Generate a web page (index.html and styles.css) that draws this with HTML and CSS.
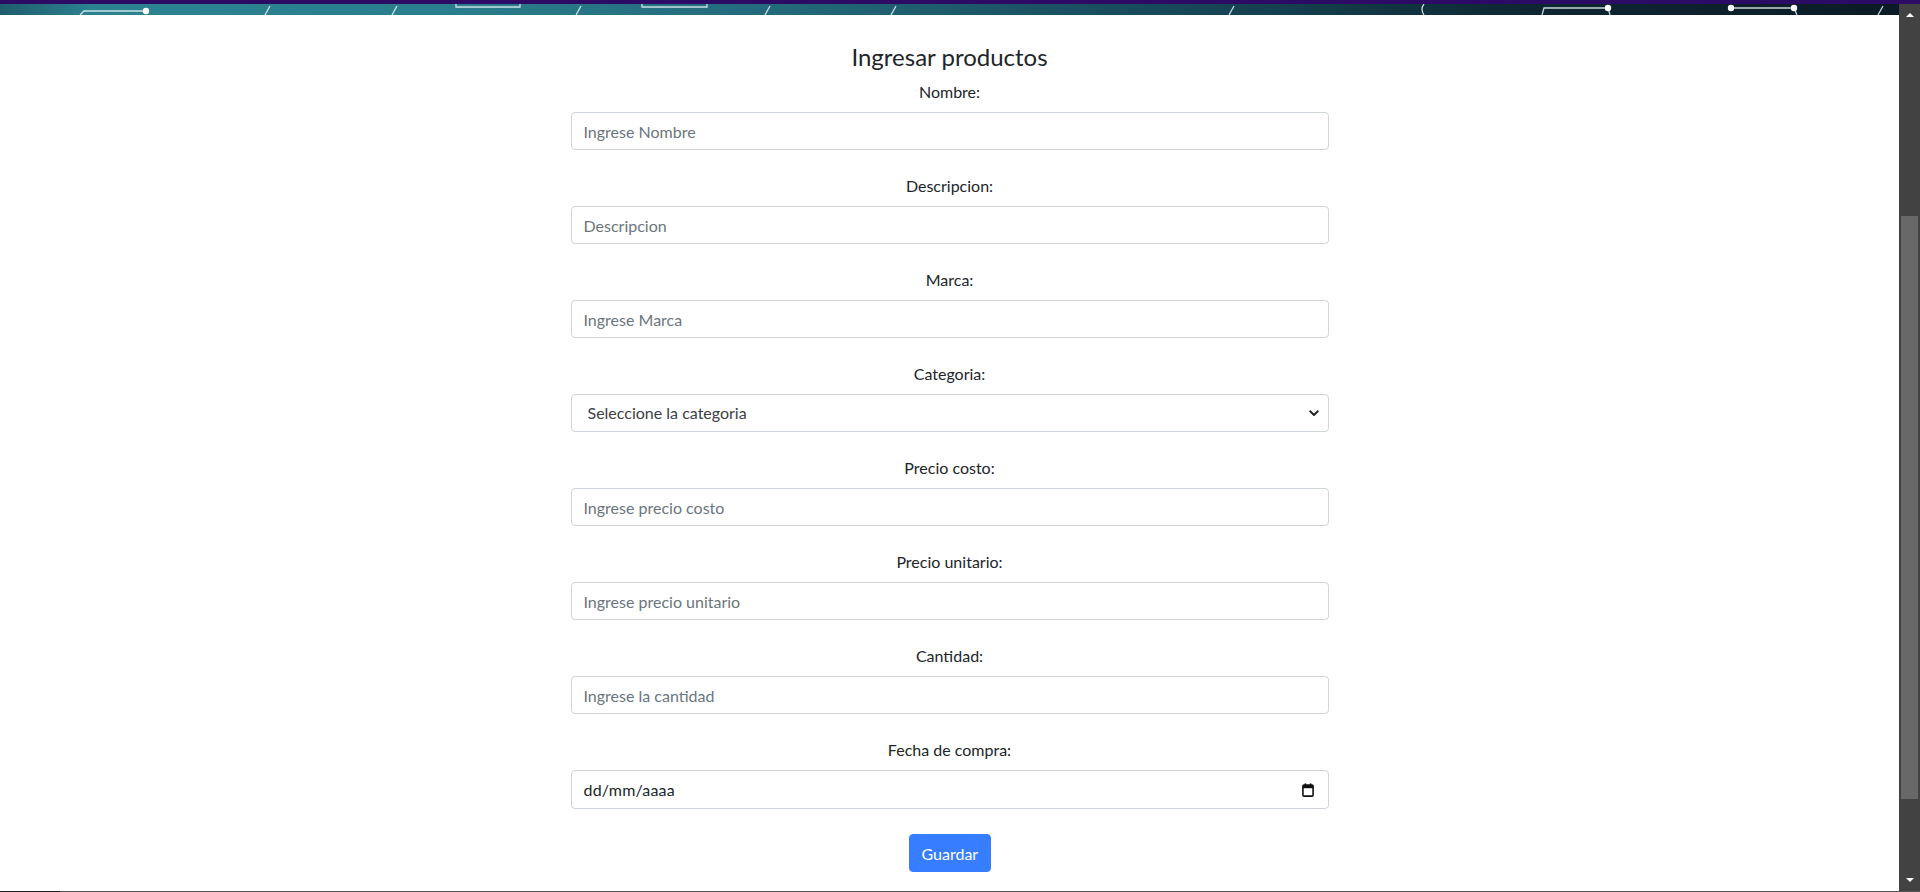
FILE: index.html
```html
<!DOCTYPE html>
<html lang="es">
<head>
<meta charset="utf-8">
<title>Ingresar productos</title>
<link rel="stylesheet" href="styles.css">
</head>
<body>
<div class="topstrip"></div>
<div class="window">
  <div class="page">
    <div class="banner">
      <svg class="banner-art" width="1899" height="11" viewBox="0 0 1899 11" preserveAspectRatio="none">
        <defs>
          <linearGradient id="bg" x1="0" y1="0" x2="1" y2="0">
            <stop offset="0" stop-color="#1f5c6e"/>
            <stop offset="0.05" stop-color="#2c8390"/>
            <stop offset="0.22" stop-color="#2b7f8c"/>
            <stop offset="0.4" stop-color="#236b7c"/>
            <stop offset="0.55" stop-color="#1b5264"/>
            <stop offset="0.68" stop-color="#143f4e"/>
            <stop offset="0.8" stop-color="#0e2733"/>
            <stop offset="1" stop-color="#0b1b26"/>
          </linearGradient>
        </defs>
        <rect width="1899" height="11" fill="url(#bg)"/>
        <g stroke="#e6f4f6" stroke-width="1.3" fill="none" stroke-opacity="0.85">
          <path d="M80 11 L84 7 L146 7"/>
          <path d="M265 11 L270 2"/>
          <path d="M392 11 L397 2"/>
          <path d="M456 0 L456 3 L520 3 L520 0"/>
          <path d="M576 11 L581 2"/>
          <path d="M642 0 L642 3 L707 3 L707 0"/>
          <path d="M765 11 L770 2"/>
          <path d="M891 11 L896 2"/>
          <path d="M1229 11 L1234 2"/>
          <path d="M1424 0 Q1420 5 1424 11"/>
          <path d="M1542 11 L1544 4 L1608 4 L1610 11"/>
          <path d="M1731 4 L1794 4 L1797 11"/>
          <path d="M1878 11 L1883 2"/>
        </g>
        <g fill="#ffffff">
          <circle cx="146" cy="7" r="3.2"/>
          <circle cx="1608" cy="4" r="3.2"/>
          <circle cx="1731" cy="4" r="3.2"/>
          <circle cx="1794" cy="4" r="3.2"/>
        </g>
      </svg>
    </div>
    <main class="content">
      <h4 class="title">Ingresar productos</h4>
      <form class="product-form">
        <div class="form-group">
          <label class="field-label" for="nombre">Nombre:</label>
          <input class="form-control" id="nombre" type="text" placeholder="Ingrese Nombre">
        </div>
        <div class="form-group">
          <label class="field-label" for="descripcion">Descripcion:</label>
          <input class="form-control" id="descripcion" type="text" placeholder="Descripcion">
        </div>
        <div class="form-group">
          <label class="field-label" for="marca">Marca:</label>
          <input class="form-control" id="marca" type="text" placeholder="Ingrese Marca">
        </div>
        <div class="form-group">
          <label class="field-label" for="categoria">Categoria:</label>
          <div class="select-wrap">
            <select class="form-control form-select" id="categoria">
              <option>Seleccione la categoria</option>
            </select>
            <svg class="select-arrow" width="10" height="7" viewBox="0 0 10 7"><path d="M1.2 1.3 L5 5 L8.8 1.3" fill="none" stroke="#222" stroke-width="1.9" stroke-linecap="round" stroke-linejoin="round"/></svg>
          </div>
        </div>
        <div class="form-group">
          <label class="field-label" for="costo">Precio costo:</label>
          <input class="form-control" id="costo" type="text" placeholder="Ingrese precio costo">
        </div>
        <div class="form-group">
          <label class="field-label" for="unitario">Precio unitario:</label>
          <input class="form-control" id="unitario" type="text" placeholder="Ingrese precio unitario">
        </div>
        <div class="form-group">
          <label class="field-label" for="cantidad">Cantidad:</label>
          <input class="form-control" id="cantidad" type="text" placeholder="Ingrese la cantidad">
        </div>
        <div class="form-group">
          <label class="field-label" for="fecha">Fecha de compra:</label>
          <div class="form-control date-control" id="fecha">
            <span class="date-text">dd/mm/aaaa</span>
            <svg class="cal-icon" width="12" height="14" viewBox="0 0 12 14"><rect x="0.9" y="2" width="10.2" height="11.1" rx="1.2" fill="none" stroke="#111" stroke-width="1.6"/><rect x="0.9" y="2" width="10.2" height="3.2" fill="#111"/><rect x="2.6" y="0.4" width="1.6" height="2.6" fill="#111"/><rect x="7.8" y="0.4" width="1.6" height="2.6" fill="#111"/></svg>
          </div>
        </div>
        <div class="actions">
          <button class="btn-primary" type="button">Guardar</button>
        </div>
      </form>
    </main>
  </div>
  <div class="scrollbar">
    <div class="sb-btn"><span class="tri-up"></span></div>
    <div class="sb-track"><div class="sb-thumb"></div></div>
    <div class="sb-btn sb-btn-down"><span class="tri-down"></span></div>
  </div>
</div>
<div class="bottomline"></div>
</body>
</html>
```

FILE: styles.css
```css
* { box-sizing: border-box; }

html, body {
  margin: 0;
  padding: 0;
  height: 892px;
  overflow: hidden;
  background: #ffffff;
}

body {
  font-family: Lato, "Liberation Sans", Arial, sans-serif;
  font-size: 16px;
  line-height: 24px;
  color: #212529;
  display: flex;
  flex-direction: column;
}

.topstrip {
  height: 4px;
  background: #2b0b63;
  flex: none;
}

.window {
  display: flex;
  height: 887px;
  flex: none;
}

.page {
  flex: 1;
  display: flex;
  flex-direction: column;
  min-width: 0;
}

.banner {
  height: 11px;
  overflow: hidden;
  flex: none;
}

.banner-art {
  display: block;
  width: 100%;
  height: 11px;
}

.content {
  display: flex;
  flex-direction: column;
  align-items: center;
  padding-top: 27px;
}

.title {
  margin: 0 0 9px;
  font-size: 24px;
  line-height: 29px;
  font-weight: 400;
  color: #212529;
}

.product-form {
  width: 758px;
  display: flex;
  flex-direction: column;
}

.form-group {
  display: flex;
  flex-direction: column;
  margin-bottom: 24px;
}

.field-label {
  display: block;
  text-align: center;
  line-height: 24px;
  margin-bottom: 8px;
  color: #212529;
}

.form-control {
  display: block;
  width: 100%;
  height: 38px;
  padding: 6px 12px;
  font-family: inherit;
  font-size: 16px;
  line-height: 24px;
  color: #495057;
  background: #ffffff;
  border: 1px solid #ced4da;
  border-radius: 4px;
  outline: none;
}

.form-control::placeholder {
  color: #6c757d;
  opacity: 1;
}

.select-wrap {
  position: relative;
}

.form-select {
  appearance: none;
  -webkit-appearance: none;
  padding-left: 16px;
  color: #3a4047;
}

.select-arrow {
  position: absolute;
  right: 10px;
  top: 16px;
}

.date-control {
  display: flex;
  align-items: center;
  justify-content: space-between;
  height: 39px;
  padding-right: 14px;
  color: #212529;
}

.date-text {
  letter-spacing: 0.2px;
}

.cal-icon {
  display: block;
}

.actions {
  display: flex;
  justify-content: center;
  margin-top: 1px;
}

.btn-primary {
  font-family: inherit;
  font-size: 16px;
  line-height: 24px;
  padding: 7px 12px;
  width: 82px;
  height: 38px;
  color: #ffffff;
  background: #377dff;
  border: 1px solid #377dff;
  border-radius: 4px;
}

.scrollbar {
  width: 21px;
  flex: none;
  background: #424242;
  display: flex;
  flex-direction: column;
  align-items: center;
}

.sb-btn {
  height: 20px;
  width: 100%;
  display: flex;
  align-items: center;
  justify-content: center;
  flex: none;
}

.sb-btn-down {
  margin-top: auto;
}

.tri-up {
  width: 0;
  height: 0;
  border-left: 4.5px solid transparent;
  border-right: 4.5px solid transparent;
  border-bottom: 4px solid #ffffff;
  margin-top: 2px;
}

.tri-down {
  width: 0;
  height: 0;
  border-left: 4.5px solid transparent;
  border-right: 4.5px solid transparent;
  border-top: 4px solid #ffffff;
  margin-top: -2px;
}

.sb-track {
  width: 100%;
  padding-top: 192px;
  display: flex;
  justify-content: center;
}

.sb-thumb {
  width: 17px;
  height: 583px;
  background: #686868;
}

.bottomline {
  height: 1px;
  flex: none;
  background: linear-gradient(90deg, #1c1c1c 0, #1c1c1c 60px, #555555 60px, #555555 100%);
}
```
